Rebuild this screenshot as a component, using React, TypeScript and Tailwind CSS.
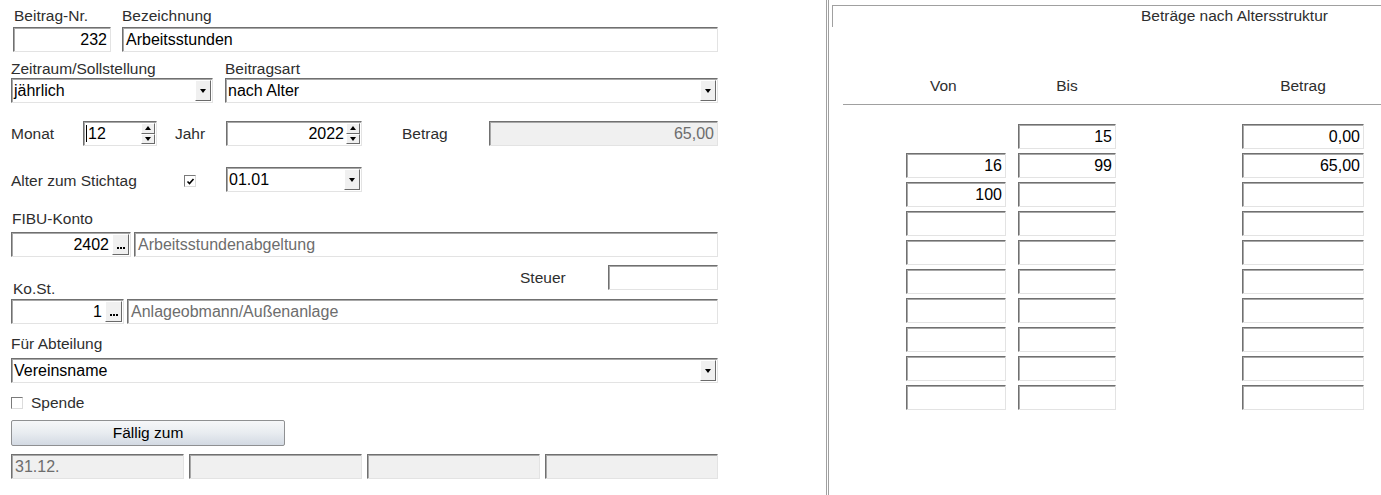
import type { ReactNode } from "react";

const sunken =
  "border border-t-[#707070] border-l-[#707070] border-r-[#e3e3e3] border-b-[#e3e3e3] shadow-[inset_1px_1px_0_#a8a8a8]";

const Label = ({ children, className = "" }: { children: ReactNode; className?: string }) => (
  <div className={`text-[15.5px] leading-[17px] text-[#2e2e2e] whitespace-nowrap ${className}`}>{children}</div>
);

const Field = ({
  value = "",
  right = false,
  muted = false,
  disabled = false,
  className = "",
}: {
  value?: string;
  right?: boolean;
  muted?: boolean;
  disabled?: boolean;
  className?: string;
}) => (
  <div
    className={`h-[25px] flex items-center px-[3px] text-[16px] whitespace-nowrap overflow-hidden ${sunken} ${
      disabled ? "bg-[#f0f0f0]" : "bg-white"
    } ${right ? "justify-end" : ""} ${muted ? "text-[#6d6d6d]" : "text-black"} ${className}`}
  >
    {value}
  </div>
);

const Arrow = ({ up = false }: { up?: boolean }) => (
  <div
    className={`w-0 h-0 border-l-[3.5px] border-r-[3.5px] border-l-transparent border-r-transparent ${
      up ? "border-b-[4px] border-b-black" : "border-t-[4px] border-t-black"
    }`}
  />
);

const Select = ({ value, className = "" }: { value: string; className?: string }) => (
  <div className={`h-[25px] flex bg-white ${sunken} ${className}`}>
    <div className="flex-1 flex items-center pl-[2px] text-[16px] text-black whitespace-nowrap">{value}</div>
    <div className="w-[16px] my-[1px] mr-[1px] bg-[#f0f0f0] border border-t-white border-l-white border-r-[#6a6a6a] border-b-[#6a6a6a] flex items-center justify-center">
      <Arrow />
    </div>
  </div>
);

const Spin = ({ value, right = false, caret = false, className = "" }: { value: string; right?: boolean; caret?: boolean; className?: string }) => (
  <div className={`h-[25px] flex bg-white ${sunken} ${className}`}>
    <div className={`flex-1 flex items-center px-[2px] text-[16px] text-black ${right ? "justify-end" : ""}`}>
      {caret && <div className="w-px h-[17px] bg-black mr-px" />}
      {value}
    </div>
    <div className="w-[14px] flex flex-col my-[1px] mr-[1px]">
      <div className="flex-1 bg-[#f0f0f0] border border-t-white border-l-white border-r-[#6a6a6a] border-b-[#6a6a6a] flex items-center justify-center">
        <Arrow up />
      </div>
      <div className="flex-1 bg-[#f0f0f0] border border-t-white border-l-white border-r-[#6a6a6a] border-b-[#6a6a6a] flex items-center justify-center">
        <Arrow />
      </div>
    </div>
  </div>
);

const Lookup = ({ value, className = "" }: { value: string; className?: string }) => (
  <div className={`h-[25px] flex items-center bg-white ${sunken} ${className}`}>
    <div className="flex-1 text-right pr-[3px] text-[16px] text-black">{value}</div>
    <div className="w-[17px] h-[21px] mr-px bg-[#f0f0f0] border border-t-white border-l-white border-r-[#6a6a6a] border-b-[#6a6a6a] flex items-end justify-center pb-[5px]">
      <div className="flex gap-px">
        <div className="w-[2px] h-[2px] bg-black" />
        <div className="w-[2px] h-[2px] bg-black" />
        <div className="w-[2px] h-[2px] bg-black" />
      </div>
    </div>
  </div>
);

const Check = ({ checked = false }: { checked?: boolean }) => (
  <div className="w-[12px] h-[12px] bg-white border border-t-[#7a7a7a] border-l-[#7a7a7a] border-r-[#dcdcdc] border-b-[#dcdcdc] flex items-center justify-center">
    {checked && (
      <svg width="9" height="9" viewBox="0 0 9 9">
        <path d="M1.5 4.5 L3.5 6.5 L7.5 2" stroke="#000" strokeWidth="1.6" fill="none" />
      </svg>
    )}
  </div>
);

const ageRows = [
  { von: "", bis: "15", betrag: "0,00", noVon: true },
  { von: "16", bis: "99", betrag: "65,00" },
  { von: "100", bis: "", betrag: "" },
  { von: "", bis: "", betrag: "" },
  { von: "", bis: "", betrag: "" },
  { von: "", bis: "", betrag: "" },
  { von: "", bis: "", betrag: "" },
  { von: "", bis: "", betrag: "" },
  { von: "", bis: "", betrag: "" },
  { von: "", bis: "", betrag: "" },
];

export default function App() {
  return (
    <div className="w-[1381px] h-[495px] bg-white flex overflow-hidden font-['Liberation_Sans',Arial,sans-serif]">
      {/* left: Beitrag form */}
      <div className="w-[826px] pl-[11px] pt-[7px]">
        <div className="w-[707px] flex flex-col">
          <div className="flex">
            <div className="ml-[2px] w-[98px]">
              <Label className="pl-[1px]">Beitrag-Nr.</Label>
              <Field value="232" right className="mt-[3px]" />
            </div>
            <div className="ml-[11px] w-[596px]">
              <Label>Bezeichnung</Label>
              <Field value="Arbeitsstunden" className="mt-[3px]" />
            </div>
          </div>

          <div className="flex mt-[8px]">
            <div className="w-[202px]">
              <Label>Zeitraum/Sollstellung</Label>
              <Select value="jährlich" className="mt-[1px]" />
            </div>
            <div className="ml-[12px] w-[493px]">
              <Label>Beitragsart</Label>
              <Select value="nach Alter" className="mt-[1px]" />
            </div>
          </div>

          <div className="flex items-center h-[25px] mt-[18px]">
            <Label className="w-[72px]">Monat</Label>
            <Spin value="12" caret className="w-[74px]" />
            <Label className="ml-[18px] w-[51px]">Jahr</Label>
            <Spin value="2022" right className="w-[136px]" />
            <Label className="ml-[40px] w-[87px]">Betrag</Label>
            <Field value="65,00" right muted disabled className="w-[229px]" />
          </div>

          <div className="flex items-center h-[25px] mt-[21px]">
            <Label className="w-[173px] pt-[2px]">Alter zum Stichtag</Label>
            <div className="pt-[3px]">
              <Check checked />
            </div>
            <Select value="01.01" className="ml-[30px] w-[136px]" />
          </div>

          <Label className="mt-[18px] pl-[1px]">FIBU-Konto</Label>
          <div className="flex mt-[5px]">
            <Lookup value="2402" className="w-[120px]" />
            <Field value="Arbeitsstundenabgeltung" muted className="ml-[3px] flex-1" />
          </div>

          <div className="flex justify-between h-[34px] mt-[8px]">
            <Label className="self-end pl-[2px] pb-[2px]">Ko.St.</Label>
            <div className="flex items-center h-[25px]">
              <Label className="w-[88px]">Steuer</Label>
              <Field className="w-[110px]" />
            </div>
          </div>
          <div className="flex">
            <Lookup value="1" className="w-[113px]" />
            <Field value="Anlageobmann/Außenanlage" muted className="ml-[3px] flex-1" />
          </div>

          <Label className="mt-[11px]">Für Abteilung</Label>
          <Select value="Vereinsname" className="mt-[6px]" />

          <div className="flex items-center h-[17px] mt-[11px]">
            <Check />
            <Label className="ml-[8px]">Spende</Label>
          </div>

          <button className="mt-[9px] w-[274px] h-[26px] rounded-[2px] border border-[#8f9092] bg-linear-to-b from-[#f6f7f9] via-[#e8ecf0] to-[#d3dae3] text-[15.5px] text-black">
            Fällig zum
          </button>

          <div className="flex gap-[5px] mt-[8px]">
            <Field value="31.12." muted disabled className="w-[173px]" />
            <Field disabled className="w-[173px]" />
            <Field disabled className="w-[173px]" />
            <Field disabled className="w-[173px]" />
          </div>
        </div>
      </div>

      {/* right: age structure */}
      <div className="flex-1 border-l-[3px] border-double border-[#a0a0a0] flex flex-col">
        <div className="mt-[5px] ml-[3px] h-[22px] border-t border-l border-[#a0a0a0]">
          <Label className="pl-[308px] pt-[1px]">Beträge nach Altersstruktur</Label>
        </div>

        <div className="flex mt-[50px] pl-[77px]">
          <Label className="w-[100px] pl-[24px]">Von</Label>
          <Label className="ml-[12px] w-[98px] text-center">Bis</Label>
          <Label className="ml-[126px] w-[122px] text-center">Betrag</Label>
        </div>

        <div className="mt-[10px] ml-[14px] h-px bg-[#a0a0a0]" />

        <div className="mt-[19px] flex flex-col gap-[4px] pl-[77px]">
          {ageRows.map((r, i) => (
            <div key={i} className="flex">
              {r.noVon ? <div className="w-[100px]" /> : <Field value={r.von} right className="w-[100px]" />}
              <Field value={r.bis} right className="ml-[12px] w-[98px]" />
              <Field value={r.betrag} right className="ml-[126px] w-[122px]" />
            </div>
          ))}
        </div>
      </div>
    </div>
  );
}
